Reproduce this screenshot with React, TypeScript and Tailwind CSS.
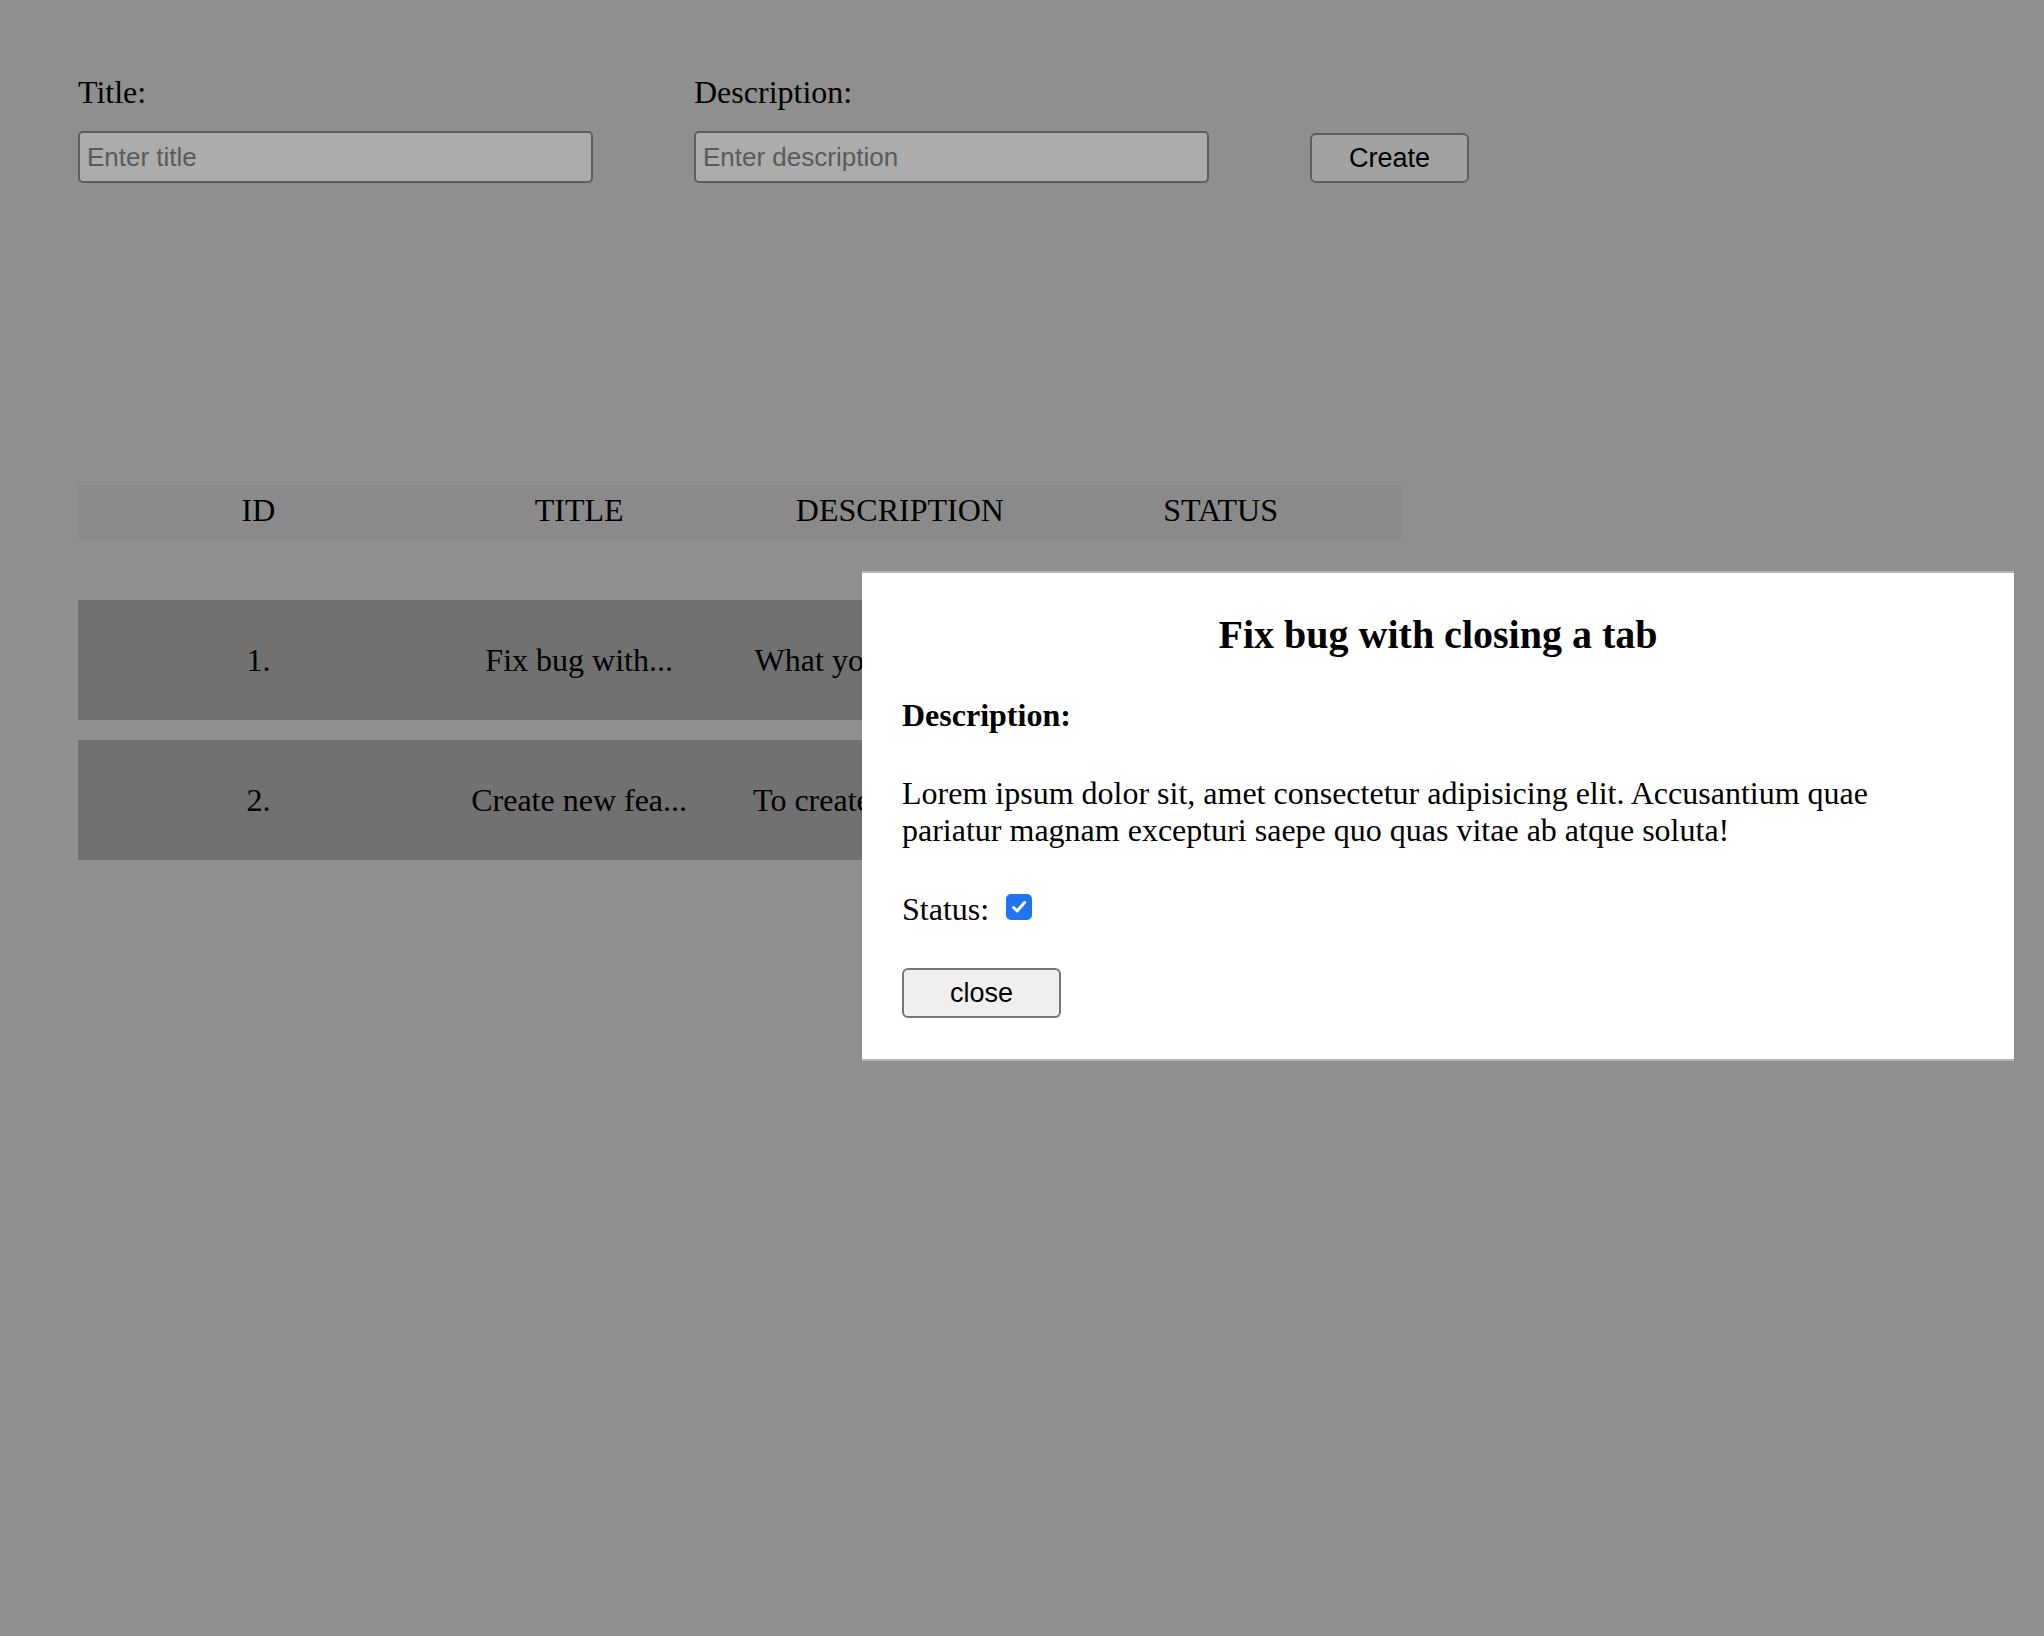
import React from "react";

const serif = { fontFamily: '"Liberation Serif", "Times New Roman", serif' };

function Check() {
  return (
    <span className="inline-flex h-[26px] w-[26px] items-center justify-center rounded-[5px] bg-[#1f74f2]">
      <svg width="18" height="18" viewBox="0 0 18 18" fill="none">
        <path d="M3.5 9.5 L7.2 13 L14.5 4.5" stroke="white" strokeWidth="3" strokeLinecap="round" strokeLinejoin="round" />
      </svg>
    </span>
  );
}

export default function App() {
  const rows = [
    { id: "1.", title: "Fix bug with...", desc: "What you need to do..." },
    { id: "2.", title: "Create new fea...", desc: "To create a new page..." },
  ];
  return (
    <div className="relative min-h-screen w-full bg-[#8f8f8f] text-black" style={serif}>
      <div className="px-[78px] pt-[74px]">
        <div className="flex items-end gap-[101px]">
          <div className="flex w-[515px] flex-col">
            <label className="text-[32px] leading-[37px]">Title:</label>
            <input
              placeholder="Enter title"
              className="mt-[20px] h-[52px] w-[515px] rounded-[5px] border-2 border-[#5e5e5e] bg-[#acacac] px-[7px] text-[26px] placeholder:text-[#5a5a5a] outline-none"
              style={{ fontFamily: '"Liberation Sans", Arial, sans-serif' }}
            />
          </div>
          <div className="flex w-[515px] flex-col">
            <label className="text-[32px] leading-[37px]">Description:</label>
            <input
              placeholder="Enter description"
              className="mt-[20px] h-[52px] w-[515px] rounded-[5px] border-2 border-[#5e5e5e] bg-[#acacac] px-[7px] text-[26px] placeholder:text-[#5a5a5a] outline-none"
              style={{ fontFamily: '"Liberation Sans", Arial, sans-serif' }}
            />
          </div>
          <button
            className="h-[50px] w-[159px] rounded-[6px] border-2 border-[#5e5e5e] bg-[#a2a2a2] text-[27px] text-black"
            style={{ fontFamily: '"Liberation Sans", Arial, sans-serif' }}
          >
            Create
          </button>
        </div>

        <div className="mt-[302px] grid h-[55px] w-[1323px] grid-cols-4 items-center bg-[#8a8a8a] px-[20px] pb-[4px] text-[32px] leading-[37px]">
          <div className="text-center">ID</div>
          <div className="text-center">TITLE</div>
          <div className="text-center">DESCRIPTION</div>
          <div className="text-center">STATUS</div>
        </div>

        <div className="mt-[60px] flex w-[1323px] flex-col gap-[20px]">
          {rows.map((r) => (
            <div key={r.id} className="grid h-[120px] grid-cols-4 items-center bg-[#717171] px-[20px] text-[32px] leading-[37px]">
              <div className="text-center">{r.id}</div>
              <div className="text-center">{r.title}</div>
              <div className="whitespace-nowrap text-center">{r.desc}</div>
              <div className="flex justify-center">
                <span className="h-[26px] w-[26px] rounded-[5px] border-2 border-[#555] bg-[#aaa]" />
              </div>
            </div>
          ))}
        </div>
      </div>

      <div className="absolute left-[862px] top-[571px] w-[1152px] border-y-2 border-[#b4b4b4] bg-white px-[40px] pb-[41px] pt-[39px]">
        <h2 className="text-center text-[40px] font-bold leading-[46px]">Fix bug with closing a tab</h2>
        <div className="mt-[39px] text-[32px] font-bold leading-[37px]">Description:</div>
        <p className="mt-[41px] text-[32px] leading-[37px]">
          Lorem ipsum dolor sit, amet consectetur adipisicing elit. Accusantium quae pariatur magnam excepturi saepe quo quas vitae ab atque soluta!
        </p>
        <div className="mt-[42px] flex items-center gap-[17px] text-[32px] leading-[37px]">
          <span>Status:</span>
          <span className="-mt-[5px] flex">
            <Check />
          </span>
        </div>
        <button
          className="mt-[40px] block h-[50px] w-[159px] rounded-[6px] border-2 border-[#767676] bg-[#efefef] text-[27px] text-black"
          style={{ fontFamily: '"Liberation Sans", Arial, sans-serif' }}
        >
          close
        </button>
      </div>
    </div>
  );
}
